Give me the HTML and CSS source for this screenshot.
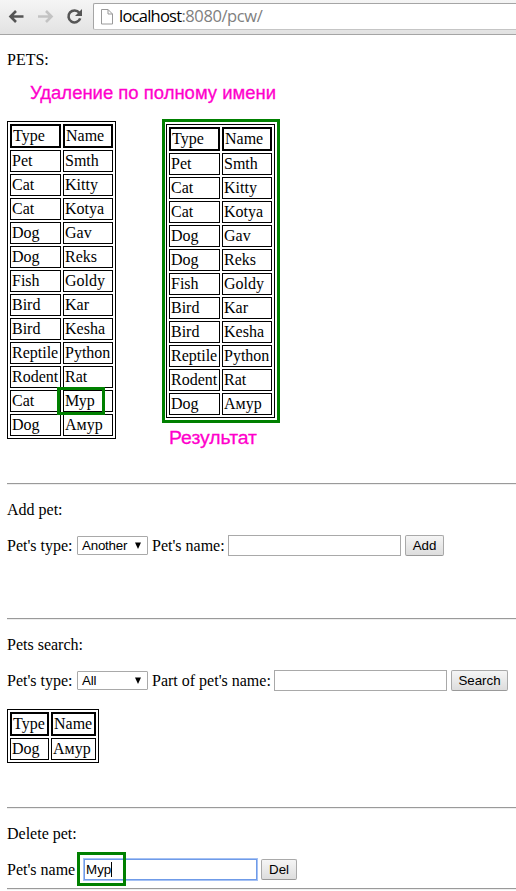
FILE: index.html
```html
<!DOCTYPE html>
<html lang="en">
<head>
<meta charset="utf-8">
<title>Pets</title>
<link rel="stylesheet" href="styles.css">
</head>
<body>
<header class="toolbar">
  <svg class="nav" width="93" height="34" viewBox="0 0 93 34" fill="none">
    <path d="M23.5 16.5H11M16 11l-5.500 5.500L16 22" stroke="#555" stroke-width="2.600"/>
    <path d="M38 16.500h12.500M46 11l5.500 5.500-5.500 5.500" stroke="#c3c3c3" stroke-width="2.600"/>
    <path d="M79.300 12.800a6 6 0 1 0 .9 5.600" stroke="#555" stroke-width="2.600"/>
    <path d="M82 9v7h-7z" fill="#555"/>
  </svg>
  <div class="address">
    <svg class="page-icon" width="12" height="16" viewBox="0 0 12 16" fill="#fff" stroke="#999"><path d="M.5.500h6.500l4.500 4.500v10H.5zM7 .500V5h4.500"/></svg>
    <span class="url">localhost<span class="path">:8080/pcw/</span></span>
  </div>
</header>
<main>
  <section class="pets">
    <p>PETS:</p>
    <div class="tables">
      <table class="wide">
        <tr><th>Type</th><th>Name</th></tr>
        <tr><td>Pet</td><td>Smth</td></tr>
        <tr><td>Cat</td><td>Kitty</td></tr>
        <tr><td>Cat</td><td>Kotya</td></tr>
        <tr><td>Dog</td><td>Gav</td></tr>
        <tr><td>Dog</td><td>Reks</td></tr>
        <tr><td>Fish</td><td>Goldy</td></tr>
        <tr><td>Bird</td><td>Kar</td></tr>
        <tr><td>Bird</td><td>Kesha</td></tr>
        <tr><td>Reptile</td><td>Python</td></tr>
        <tr><td>Rodent</td><td>Rat</td></tr>
        <tr><td>Cat</td><td class="marked">Мур<i class="mark mark-cell"></i></td></tr>
        <tr><td>Dog</td><td>Амур</td></tr>
      </table>
      <div class="result">
        <table class="wide">
          <tr><th>Type</th><th>Name</th></tr>
          <tr><td>Pet</td><td>Smth</td></tr>
          <tr><td>Cat</td><td>Kitty</td></tr>
          <tr><td>Cat</td><td>Kotya</td></tr>
          <tr><td>Dog</td><td>Gav</td></tr>
          <tr><td>Dog</td><td>Reks</td></tr>
          <tr><td>Fish</td><td>Goldy</td></tr>
          <tr><td>Bird</td><td>Kar</td></tr>
          <tr><td>Bird</td><td>Kesha</td></tr>
          <tr><td>Reptile</td><td>Python</td></tr>
          <tr><td>Rodent</td><td>Rat</td></tr>
          <tr><td>Dog</td><td>Амур</td></tr>
        </table>
      </div>
    </div>
    <svg class="note note-title" width="260" height="28"><text x="1" y="19" textLength="246" lengthAdjust="spacingAndGlyphs">Удаление по полному имени</text></svg>
    <svg class="note note-result" width="100" height="28"><text x="1" y="19" textLength="88" lengthAdjust="spacingAndGlyphs">Результат</text></svg>
  </section>
  <section class="add">
    <p>Add pet:</p>
    <div class="row">
      <span class="label-type">Pet's type:</span>
      <span class="select">Another<svg width="8" height="8"><path d="M1 .5h6L4 7z"/></svg></span>
      <span class="label-name">Pet's name:</span>
      <input type="text">
      <button class="b-add">Add</button>
    </div>
  </section>
  <section class="search">
    <p>Pets search:</p>
    <div class="row">
      <span class="label-type">Pet's type:</span>
      <span class="select">All<svg width="8" height="8"><path d="M1 .5h6L4 7z"/></svg></span>
      <span class="label-part">Part of pet's name:</span>
      <input type="text">
      <button class="b-search">Search</button>
    </div>
    <table class="found">
      <tr><th>Type</th><th>Name</th></tr>
      <tr><td>Dog</td><td>Амур</td></tr>
    </table>
  </section>
  <section class="delete">
    <p>Delete pet:</p>
    <div class="row">
      <span class="label-del">Pet's name</span>
      <span class="focused">Мур<i class="caret"></i><i class="mark mark-input"></i></span>
      <button class="b-del">Del</button>
    </div>
  </section>
  <section class="end"></section>
</main>
</body>
</html>
```
FILE: styles.css
```css
* { box-sizing: border-box; }
html { overflow: hidden; }
body { margin: 0; height: 891px; overflow: hidden; background: #fff; color: #000; font: 16px/18px "Liberation Serif", serif; }
.toolbar { display: flex; height: 35px; background: linear-gradient(#f5f5f5, #e2e2e2); border-bottom: 1px solid #a5a5a5; }
.nav { flex: none; }
.address { flex: 1; display: flex; align-items: center; height: 27px; margin-top: 3px; padding-left: 7px; background: #fff; border: 1px solid #a5a5a5; border-right: 0; border-bottom-color: #c5c5c5; border-radius: 2px 0 0 2px; }
.page-icon { flex: none; margin-right: 6px; }
.url { margin-top: -2px; font: 16.5px/22px "Open Sans", sans-serif; letter-spacing: -0.75px; white-space: nowrap; }
.path { color: #808080; letter-spacing: -0.4px; }
main { padding-left: 7px; }
p { margin: 0; }
section { position: relative; border-top: 1px solid #9a9a9a; box-shadow: inset 0 1px #eee; padding-top: 17px; }
.pets { height: 448px; border: 0; box-shadow: none; padding-top: 16px; }
.add { height: 135px; }
.search { height: 189px; }
.delete { height: 81px; }
.end { height: 3px; padding: 0; }
.tables { display: flex; align-items: flex-start; gap: 46px; margin-top: 50px; }
.tables > table { margin-top: 2px; }
.result { border: 3px solid #008000; width: 118px; height: 304px; padding: 2px 1px; }
table { table-layout: fixed; border-collapse: separate; border-spacing: 2px; border: 1px solid #000; }
.wide { width: 109px; }
.found { width: 92px; margin-top: 18px; }
th, td { padding: 0 1px; border: 1px solid #000; text-align: left; font-weight: 400; height: 22px; line-height: 18px; white-space: nowrap; }
th { border-width: 2px; height: 24px; }
.wide th:first-child { width: 51px; }
.found th:first-child { width: 39px; }
.marked { position: relative; }
.mark { position: absolute; border: 3px solid #008000; }
.mark-cell { left: -7px; top: -4px; width: 48px; height: 28px; }
.note { position: absolute; font: 18px "Liberation Sans", sans-serif; fill: #ff00cc; stroke: #ff00cc; stroke-width: .3px; }
.note-title { left: 22px; top: 45px; }
.note-result { left: 161px; top: 390px; }
.row { display: flex; align-items: center; height: 21px; margin-top: 16px; white-space: nowrap; }
.label-type { width: 70px; }
.label-name { width: 76px; }
.label-part { width: 122px; }
.label-del { width: 77px; }
.select, button, input, .focused { font: 13.333px/17px "Liberation Sans", sans-serif; color: #000; }
.select { display: flex; align-items: center; justify-content: space-between; width: 71px; height: 19px; margin-right: 4px; padding: 0 5px 0 4px; border: 1px solid #a9a9a9; border-radius: 1px; letter-spacing: -0.2px; }
input, .focused { width: 173px; height: 21px; margin: 0 4px 0 0; padding: 1px 2px; border: 1px solid #a9a9a9; background: #fff; }
button { height: 21px; padding: 0; border: 1px solid #a9a9a9; border-bottom-color: #999; border-radius: 2px; background: linear-gradient(#f5f5f5, #ddd); }
.b-add { width: 39px; }
.b-search { width: 57px; }
.b-del { width: 36px; }
.focused { position: relative; display: flex; padding-left: 1px; border-color: #6f9be8; box-shadow: 0 0 0 1px #a5c1f4; }
.caret { width: 1px; height: 15px; margin-top: 1px; background: #000; }
.mark-input { left: -8px; top: -8px; width: 49px; height: 34px; }
```
